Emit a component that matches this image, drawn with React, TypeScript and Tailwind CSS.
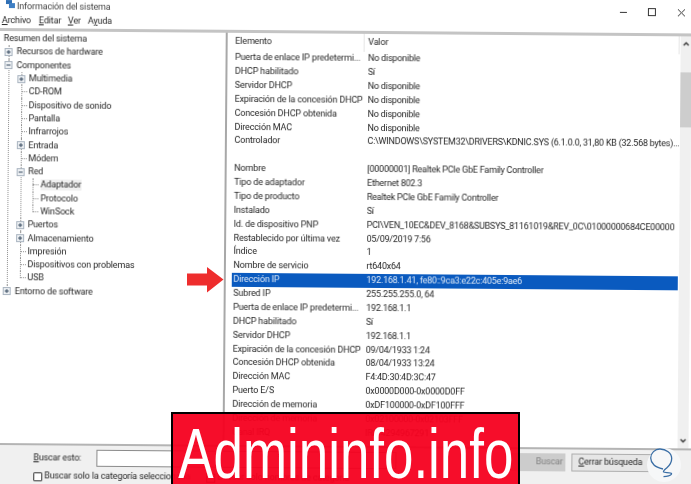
const font = "font-['Roboto','Open_Sans',sans-serif]";

type TreeNode = { label: string; open?: boolean; closed?: boolean; selected?: boolean; children?: TreeNode[] };

const tree: TreeNode[] = [
  { label: 'Recursos de hardware', closed: true },
  {
    label: 'Componentes',
    open: true,
    children: [
      { label: 'Multimedia', closed: true },
      { label: 'CD-ROM' },
      { label: 'Dispositivo de sonido' },
      { label: 'Pantalla' },
      { label: 'Infrarrojos' },
      { label: 'Entrada', closed: true },
      { label: 'Módem' },
      {
        label: 'Red',
        open: true,
        children: [{ label: 'Adaptador', selected: true }, { label: 'Protocolo' }, { label: 'WinSock' }],
      },
      { label: 'Puertos', closed: true },
      { label: 'Almacenamiento', closed: true },
      { label: 'Impresión' },
      { label: 'Dispositivos con problemas' },
      { label: 'USB' },
    ],
  },
  { label: 'Entorno de software', closed: true },
];

const rows: [string, string][] = [
  ['Puerta de enlace IP predetermi...', 'No disponible'],
  ['DHCP habilitado', 'Sí'],
  ['Servidor DHCP', 'No disponible'],
  ['Expiración de la concesión DHCP', 'No disponible'],
  ['Concesión DHCP obtenida', 'No disponible'],
  ['Dirección MAC', 'No disponible'],
  ['Controlador', 'C:\\WINDOWS\\SYSTEM32\\DRIVERS\\KDNIC.SYS (6.1.0.0, 31,80 KB (32.568 bytes)...'],
  ['', ''],
  ['Nombre', '[00000001] Realtek PCIe GbE Family Controller'],
  ['Tipo de adaptador', 'Ethernet 802.3'],
  ['Tipo de producto', 'Realtek PCIe GbE Family Controller'],
  ['Instalado', 'Sí'],
  ['Id. de dispositivo PNP', 'PCI\\VEN_10EC&DEV_8168&SUBSYS_81161019&REV_0C\\01000000684CE00000'],
  ['Restablecido por última vez', '05/09/2019 7:56'],
  ['Índice', '1'],
  ['Nombre de servicio', 'rt640x64'],
  ['Dirección IP', '192.168.1.41, fe80::9ca3:e22c:405e:9ae6'],
  ['Subred IP', '255.255.255.0, 64'],
  ['Puerta de enlace IP predetermi...', '192.168.1.1'],
  ['DHCP habilitado', 'Sí'],
  ['Servidor DHCP', '192.168.1.1'],
  ['Expiración de la concesión DHCP', '09/04/1933 1:24'],
  ['Concesión DHCP obtenida', '08/04/1933 13:24'],
  ['Dirección MAC', 'F4:4D:30:4D:3C:47'],
  ['Puerto E/S', '0x0000D000-0x0000D0FF'],
  ['Dirección de memoria', '0xDF100000-0xDF100FFF'],
  ['Dirección de memoria', '0x02100000-0x02103FFF'],
  ['Canal IRQ', 'IRQ 4294967291'],
];

function Expander({ open }: { open?: boolean }) {
  return (
    <svg width="8" height="8" viewBox="0 0 8 8" className="-ml-[4px] mr-[4px] shrink-0 bg-white">
      <rect x="0.5" y="0.5" width="7" height="7" fill="#eef1f4" stroke="#a9b4c0" />
      <path d={open ? 'M2 4h4' : 'M2 4h4M4 2v4'} stroke="#33475c" strokeWidth="1" />
    </svg>
  );
}

function Branch({ nodes }: { nodes: TreeNode[] }) {
  return (
    <ul className="ml-[12.5px]">
      {nodes.map((node, i) => (
        <li key={node.label} className="relative">
          <span
            className={`absolute left-0 top-0 border-l border-dotted border-[#8f8f8f] ${
              i === nodes.length - 1 ? 'h-[7px]' : 'h-full'
            }`}
          />
          <div className="relative flex h-[13.3px] items-center">
            {node.open || node.closed ? (
              <Expander open={node.open} />
            ) : (
              <span className="mr-[2px] w-[6px] shrink-0 border-t border-dotted border-[#8f8f8f]" />
            )}
            <span className={`whitespace-nowrap leading-[11px] ${node.selected ? 'bg-[#f0f0f0]' : ''}`}>
              {node.label}
            </span>
          </div>
          {node.children && <Branch nodes={node.children} />}
        </li>
      ))}
    </ul>
  );
}

function Menu({ first, rest, className }: { first: string; rest: string; className: string }) {
  return (
    <span className={className}>
      <span className="underline">{first}</span>
      {rest}
    </span>
  );
}

export default function App() {
  return (
    <div className={`relative h-[484px] w-[691px] overflow-hidden bg-white text-[#262626] ${font} text-[9px] tracking-[-0.15px]`}>
      <div className="flex h-[500px] w-[700px] origin-top-left rotate-[0.45deg] flex-col blur-[0.35px]">
        {/* title bar */}
        <div className="flex h-[14px] items-center">
          <svg width="9" height="9" viewBox="0 0 9 9" className="ml-[6px] -mt-[6px]">
            <rect x="0" y="0" width="6" height="4" fill="#2f6fb5" />
            <rect x="3" y="3" width="6" height="5" fill="#3f7fc4" />
          </svg>
          <span className="ml-[2px] -mt-[1px] text-[#444]">Información del sistema</span>
          <div className="ml-auto mr-[14px] flex items-center gap-[21px]">
            <span className="h-px w-[7px] bg-[#333]" />
            <span className="h-[8px] w-[8px] border border-[#333]" />
            <svg width="9" height="9" viewBox="0 0 9 9">
              <path d="M1 1l7 7M8 1l-7 7" stroke="#333" strokeWidth="1" />
            </svg>
          </div>
        </div>

        {/* menu */}
        <div className="flex h-[14px] items-center pl-[2px]">
          <Menu first="A" rest="rchivo" className="w-[37px]" />
          <Menu first="E" rest="ditar" className="w-[29px]" />
          <Menu first="V" rest="er" className="w-[20px]" />
          <span>
            A<span className="underline">y</span>uda
          </span>
        </div>
        <div className="h-[3px] bg-[#c4c4c4]" />

        {/* panes */}
        <div className="flex h-[412px]">
          <div className="w-[226px] pt-[1px]">
            <div className="flex h-[13.3px] items-center pl-[4px]">Resumen del sistema</div>
            <div className="-ml-[3.5px]">
              <Branch nodes={tree} />
            </div>
          </div>
          <div className="w-[2px] bg-[#a8a8a8]" />
          <div className="flex flex-1">
            <div className="w-[453px] pl-[6px] pr-[1px]">
              <div className="flex h-[18px] items-center">
                <div className="h-full w-[129.5px] pl-[1.5px] pt-[2px]">Elemento</div>
                <div className="h-full w-[5px] border-l border-[#e5e5e5]" />
                <div className="h-full flex-1 border-r border-[#e5e5e5] pt-[2px]">Valor</div>
              </div>
              {rows.map(([label, value], i) => (
                <div
                  key={i}
                  className={`grid h-[13.88px] grid-cols-[134.5px_1fr] items-center whitespace-nowrap ${
                    label === 'Dirección IP' ? 'bg-[#0a5abf] text-[#dfeaf7]' : ''
                  }`}
                >
                  <span className="pl-[1.5px]">{label}</span>
                  <span className="overflow-hidden tracking-[-0.23px]">{value}</span>
                </div>
              ))}
            </div>
            <div className="flex w-[11px] flex-col items-center bg-[#f0f0f0]">
              <svg width="7" height="5" viewBox="0 0 7 5" className="mt-[5px]">
                <path d="M1 4l2.5-2.5L6 4" fill="none" stroke="#333" strokeWidth="1.3" />
              </svg>
              <div className="mt-[26px] h-[55px] w-full bg-[#cdcdcd]" />
              <svg width="7" height="5" viewBox="0 0 7 5" className="mt-auto mb-[5px]">
                <path d="M1 1l2.5 2.5L6 1" fill="none" stroke="#333" strokeWidth="1.3" />
              </svg>
            </div>
          </div>
        </div>

        {/* search bar */}
        <div className="flex flex-1 flex-col border-t-2 border-[#b4b4b4] bg-[#f0f0f0] pl-[37px] pt-[3px]">
          <div className="flex h-[19px] items-center">
            <span className="w-[63px]">
              <span className="underline">B</span>uscar esto:
            </span>
            <div className="h-[17px] w-[300px] border border-[#8a8a8a] bg-white" />
            <button className="ml-[108.5px] h-[18px] w-[60px] bg-[#cccccc] pr-[2px] text-right text-[#7f7f7f]">Buscar</button>
            <button className="ml-[6px] h-[18px] w-[84px] whitespace-nowrap border border-[#adadad] bg-[#e6e6e6] pr-[5px]">
              <span className="underline">C</span>errar búsqueda
            </button>
          </div>
          <div className="mt-[2px] flex h-[14px] items-center">
            <span className="h-[9px] w-[9px] rounded-[1px] border border-[#333] bg-white" />
            <span className="ml-[2px] w-[150px] whitespace-nowrap">Buscar solo la categoría seleccionada</span>
            <span className="ml-[12px] h-[9px] w-[9px] border border-[#333] bg-white" />
            <span className="ml-[2px] whitespace-nowrap">Buscar solo nombres de categoría</span>
          </div>
        </div>
      </div>

      {/* red arrow */}
      <svg width="37" height="26" viewBox="0 0 37 26" className="absolute left-[187px] top-[267px]">
        <path d="M0 6.500h20V0l16.500 12.500L20 25.500V18.500H0z" fill="#ee2d2d" />
      </svg>

      {/* watermark */}
      <div className="absolute left-[171px] top-[412px] h-[76px] w-[349px] overflow-hidden border-2 border-black bg-[#f5001e]/95">
        <div className="mt-[4px] w-[450px] origin-top-left scale-x-[0.745] whitespace-nowrap pl-[7px] font-['Liberation_Sans',sans-serif] text-[71px] leading-[71px] tracking-normal text-white">
          Admininfo.info
        </div>
      </div>

      {/* logo */}
      <svg width="36" height="37" viewBox="0 0 36 37" className="absolute left-[647px] top-[447px]">
        <circle cx="17" cy="18" r="17" fill="#f6f7f8" />
        <path
          d="M16 22C12 21 9 20 7 18 4 15 3.700 13 3.700 11 3.700 6 8 2 13 2 19 2 24.700 6 24.700 11.500 24.700 15 22 19 19.700 21 18 22.500 16 24 16.500 25 17 26 24 25 24.500 26.500 25 28.500 19 29.500 16.500 29.700"
          fill="none"
          stroke="#3a6ea5"
          strokeWidth="1.300"
        />
      </svg>
    </div>
  );
}
